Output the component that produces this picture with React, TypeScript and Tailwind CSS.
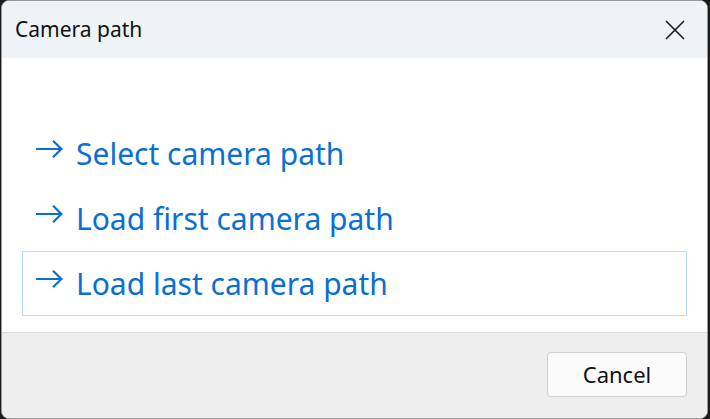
import React from "react";

function Arrow() {
  return (
    <svg width="28" height="18" viewBox="0 0 28 18" fill="none" stroke="currentColor" strokeWidth="2.2">
      <path d="M1 9h25.5" />
      <path d="M18 0.8l8.4 8.2-8.4 8.2" />
    </svg>
  );
}

function Item({ label, selected }: { label: string; selected?: boolean }) {
  return (
    <div
      className={
        "flex h-[65px] items-center gap-[13px] pl-[12px] text-[#0a6fd2] " +
        (selected ? "border border-[#b8dcf4]" : "border border-transparent")
      }
    >
      <span className="mt-[-9px]">
        <Arrow />
      </span>
      <span className="text-[30px] leading-none">{label}</span>
    </div>
  );
}

export default function App() {
  return (
    <div
      className="h-[419px] w-[710px] bg-[#1b1b1b] p-0"
      style={{ fontFamily: '"Noto Sans", "Open Sans", sans-serif' }}
    >
      <div className="ml-[1px] flex h-[419px] w-[707px] flex-col overflow-hidden rounded-[8px] border border-[#9a9a9a] bg-white">
        <div className="flex h-[57px] items-center justify-between bg-[#eef3f8] pl-[13px] pr-[22px]">
          <span className="text-[21px] text-[#111111]">Camera path</span>
          <svg width="20" height="20" viewBox="0 0 20 20" stroke="#1a1a1a" strokeWidth="1.6" fill="none">
            <path d="M1 1l18 18M19 1L1 19" />
          </svg>
        </div>
        <div className="flex flex-1 flex-col px-[20px] pt-[63px]">
          <Item label="Select camera path" />
          <Item label="Load first camera path" />
          <Item label="Load last camera path" selected />
        </div>
        <div className="flex h-[86px] items-start justify-end border-t border-[#dcdcdc] bg-[#eeeeee] pr-[20px] pt-[19px]">
          <button className="h-[45px] w-[140px] rounded-[4px] border border-[#d0d0d0] bg-[#fbfbfb] text-[22px] text-[#111111]">
            Cancel
          </button>
        </div>
      </div>
    </div>
  );
}
